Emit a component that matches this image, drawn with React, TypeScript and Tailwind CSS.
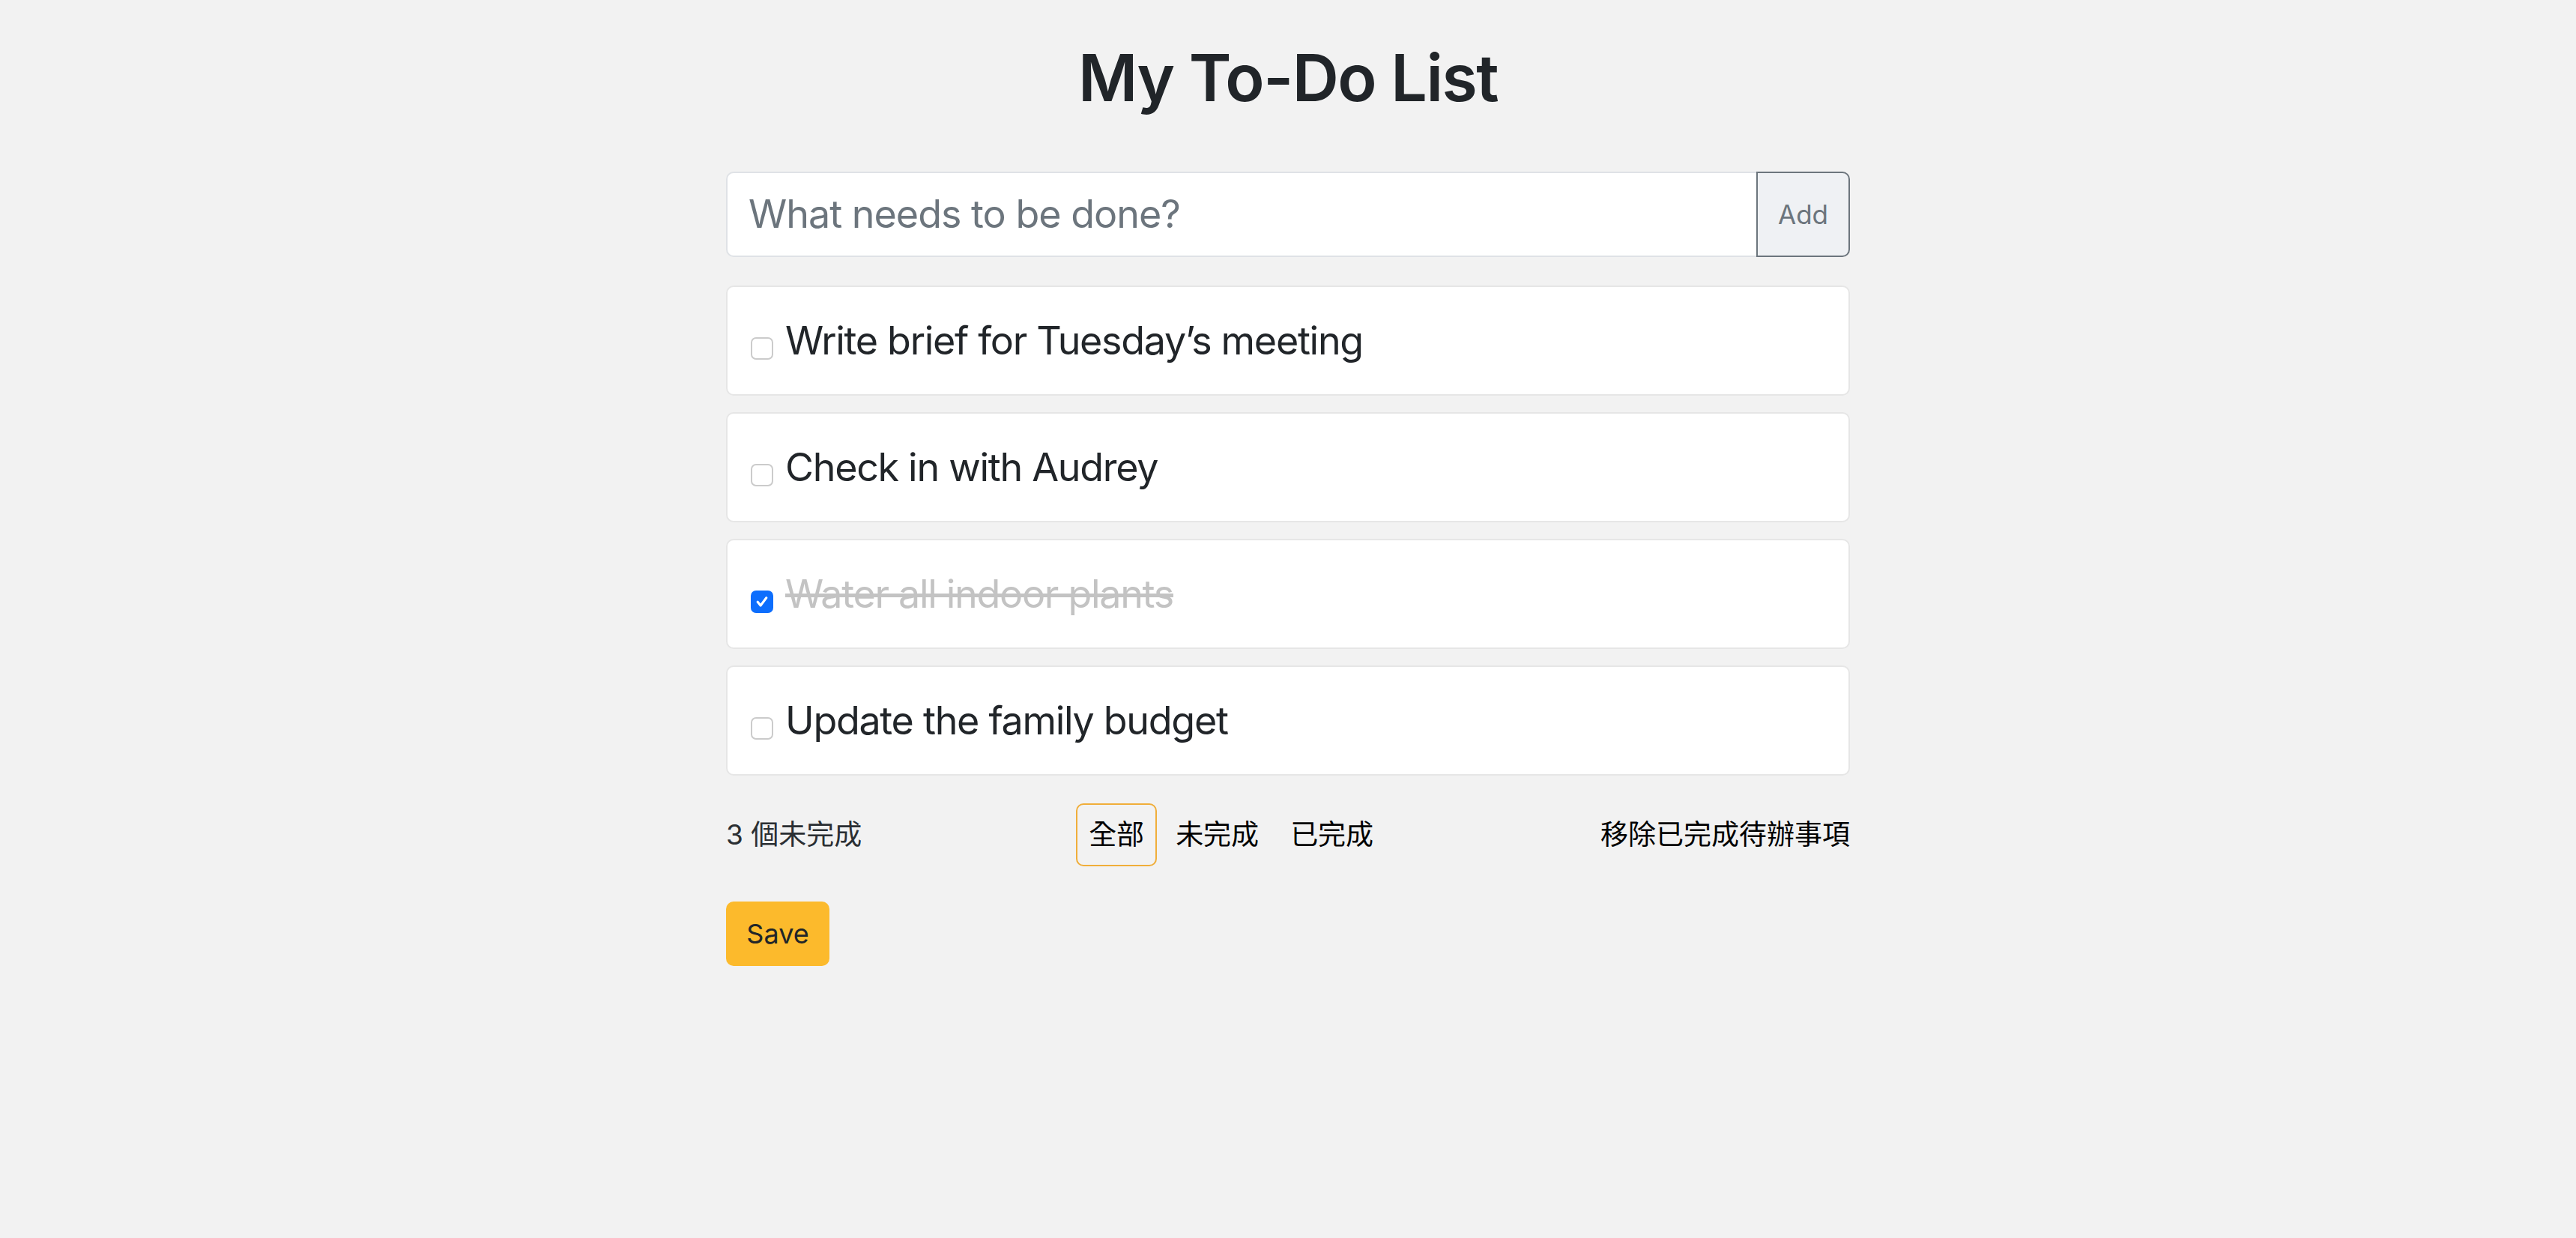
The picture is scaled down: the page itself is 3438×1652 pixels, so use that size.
import React, { useState } from "react";

type Todo = {
	id: number;
	text: string;
	done: boolean;
};

const initialTodos: Todo[] = [
	{ id: 1, text: "Write brief for Tuesday’s meeting", done: false },
	{ id: 2, text: "Check in with Audrey", done: false },
	{ id: 3, text: "Water all indoor plants", done: true },
	{ id: 4, text: "Update the family budget", done: false },
];

const filters = ["全部", "未完成", "已完成"];

function CheckBox({ checked }: { checked: boolean }) {
	if (checked) {
		return (
			<span className="mt-[20px] flex h-[30px] w-[30px] shrink-0 items-center justify-center rounded-[7px] bg-[#0d6efd]">
				<svg width="24" height="24" viewBox="0 0 20 20" fill="none">
					<path
						d="M5.2 10.2l3.2 4L14.8 5.6"
						stroke="white"
						strokeWidth="2.6"
						strokeLinecap="round"
						strokeLinejoin="round"
					/>
				</svg>
			</span>
		);
	}
	return (
		<span className="mt-[20px] block h-[30px] w-[30px] shrink-0 rounded-[7px] border-2 border-[#cbcbcb] bg-white" />
	);
}

export default function App() {
	const [todos] = useState<Todo[]>(initialTodos);
	const [filter] = useState("全部");
	const remaining = todos.filter((t) => !t.done).length;

	return (
		<div className="min-h-screen bg-[#f2f2f2] font-['Inter','Noto_Sans_CJK_TC',sans-serif] text-[#212529]">
			<div className="mx-auto w-[1500px] pt-[52px]">
				<h1 className="text-center text-[86px] font-semibold leading-[104px] tracking-[-1.5px]">
					My To-Do List
				</h1>

				<div className="mt-[73px] flex h-[114px]">
					<input
						type="text"
						placeholder="What needs to be done?"
						className="min-w-0 flex-1 rounded-l-[10px] border-2 border-r-0 border-[#dfe2e6] bg-white px-[28px] text-[52px] tracking-[-1px] text-[#212529] outline-none placeholder:text-[#6c757d]"
					/>
					<button className="w-[125px] rounded-r-[10px] border-2 border-[#6c757d] bg-[#eff1f4] text-[35px] text-[#6c757d]">
						Add
					</button>
				</div>

				<ul className="mt-[38px] flex flex-col gap-[22px]">
					{todos.map((todo) => (
						<li
							key={todo.id}
							className="flex h-[147px] items-center gap-[16px] rounded-[10px] border-2 border-[#e6e6e6] bg-white pl-[31px]"
						>
							<CheckBox checked={todo.done} />
							<span
								className={
									todo.done
										? "text-[52px] tracking-[-1.3px] text-[#c3c3c3] line-through"
										: "text-[52px] tracking-[-1.3px] text-[#212529]"
								}
							>
								{todo.text}
							</span>
						</li>
					))}
				</ul>

				<div className="mt-[37px] flex h-[84px] items-center justify-between text-[37px]">
					<span className="text-[#2b2f33]">{remaining} 個未完成</span>
					<div className="flex h-full items-center gap-[8px]">
						{filters.map((f) => (
							<button
								key={f}
								className={
									f === filter
										? "h-full rounded-[10px] border-2 border-[#f0ae3a] px-[15px] text-black"
										: "h-full rounded-[10px] border-2 border-transparent px-[15px] text-black"
								}
							>
								{f}
							</button>
						))}
					</div>
					<button className="text-black">移除已完成待辦事項</button>
				</div>

				<button className="mt-[47px] h-[86px] w-[138px] rounded-[10px] bg-[#fcba2c] text-[36px] text-[#212529]">
					Save
				</button>
			</div>
		</div>
	);
}
